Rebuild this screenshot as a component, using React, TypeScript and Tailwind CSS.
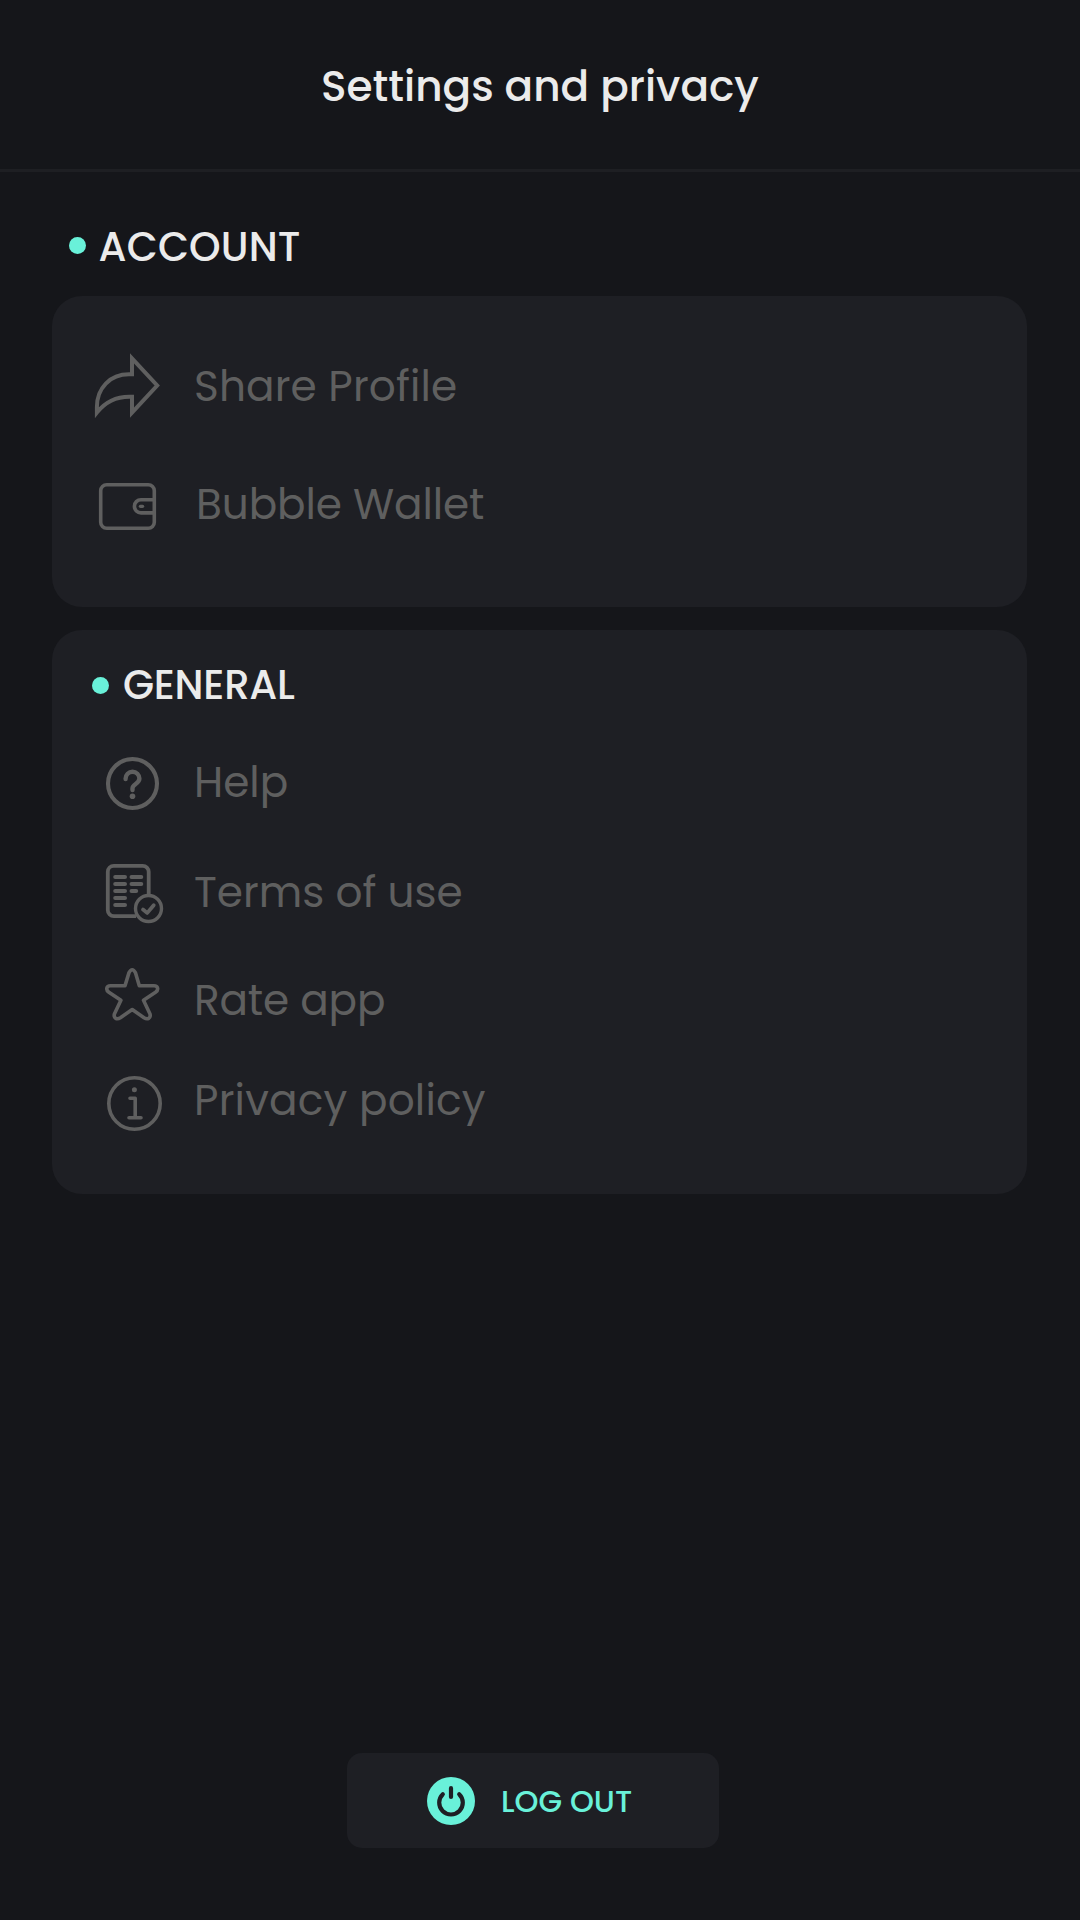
import type { ReactNode } from 'react';

function Icon({ children, width = 3.6 }: { children: ReactNode; width?: number }) {
  return (
    <svg
      viewBox="0 0 72 72"
      className="size-[72px] shrink-0"
      fill="none"
      stroke="currentColor"
      strokeWidth={width}
      aria-hidden="true"
    >
      {children}
    </svg>
  );
}

const ShareIcon = () => (
  <Icon width={4}>
    <path strokeMiterlimit={10} d="M40 8.3 65.2 35.5 40 62.7V46.7C25.5 46 13.5 51.5 4.9 62.5V57C4.9 38 18 24.3 37 24.3H40Z" />
  </Icon>
);

const WalletIcon = () => (
  <Icon>
    <rect x="8.7" y="16.7" width="53.6" height="43.6" rx="6" />
    <path d="M62.3 31.7H49a6.6 6.6 0 0 0 0 13.2h13.3" />
    <path strokeLinecap="round" strokeWidth={3.2} d="M48.4 38.3H50.6" />
  </Icon>
);

const HelpIcon = () => (
  <Icon width={4.1}>
    <circle cx="40.5" cy="37.5" r="24.5" />
    <path
      strokeLinecap="round"
      strokeLinejoin="round"
      strokeWidth={4.4}
      d="M33.6 33v-.4a6.9 6.9 0 0 1 13.8 0c0 5.2-6.9 5.4-6.9 9.6V44"
    />
    <circle cx="40.5" cy="50.3" r="2.8" fill="currentColor" stroke="none" />
  </Icon>
);

const TermsIcon = () => (
  <Icon width={3.8}>
    <path d="M56.7 39V15.8a6 6 0 0 0-6-6H21.8a6 6 0 0 0-6 6v38.4a6 6 0 0 0 6 6H44" />
    <g strokeLinecap="round" strokeWidth={4}>
      <path d="M23.2 21H33M39.5 21H49.3M23.2 28H33M39.5 28H49.3M23.2 35H33M39.5 35H44.2M23.2 42H33M23.2 49H33" />
    </g>
    <circle cx="56.5" cy="52.5" r="13" strokeWidth={3.4} />
    <path strokeLinecap="round" strokeLinejoin="round" d="m51 53.6 4.3 3.3 6.4-7.6" />
  </Icon>
);

const StarIcon = () => (
  <Icon>
    <path
      strokeLinejoin="round"
      d="M33 21.7 37 8.6Q40.2 2.8 43.4 8.6L47.3 21.7H62C66 21.7 67 25.8 63.5 28.3L51.5 36.3 58 50C59 54.3 55.5 56 52 53.7L40.2 45.5 28.4 53.7C24.9 56 21.4 54.3 22.4 50L28.9 36.3 16.9 28.3C13.4 25.8 14.4 21.7 18.4 21.7Z"
    />
  </Icon>
);

const InfoIcon = () => (
  <Icon>
    <circle cx="42.5" cy="39.5" r="25.7" />
    <circle cx="42.4" cy="25.8" r="2.5" fill="currentColor" stroke="none" />
    <path strokeLinecap="round" strokeLinejoin="round" strokeWidth={3.6} d="M38 34.3H43.2V53.7M37 53.7H49" />
  </Icon>
);

function PowerIcon() {
  return (
    <svg viewBox="0 0 48 48" className="size-12 shrink-0" fill="none" aria-hidden="true">
      <circle cx="24" cy="24" r="24" fill="#69f1d9" />
      <path
        stroke="#1e1f24"
        strokeWidth="4.2"
        strokeLinecap="round"
        d="M15.8 17.2a11.8 11.8 0 1 0 16.4 0M24 11.2V20"
      />
    </svg>
  );
}

function Row({ icon, label, className }: { icon: ReactNode; label: string; className: string }) {
  return (
    <li className={`flex items-center text-[42.2px] leading-none ${className}`}>
      {icon}
      <span className="ml-[30px] pt-[2px] whitespace-nowrap">{label}</span>
    </li>
  );
}

function Heading({ label, className }: { label: string; className: string }) {
  return (
    <h2 className={`flex items-center text-[40.2px] leading-none font-medium text-[#ebebeb] ${className}`}>
      <i className="size-[17px] rounded-full bg-[#69f1d9]" />
      <span>{label}</span>
    </h2>
  );
}

export default function App() {
  return (
    <div className="flex h-[1920px] w-[1080px] flex-col bg-[#15161a] font-['Poppins','Inter',sans-serif] text-[#5f5f5f]">
      <header className="flex h-[172px] items-center justify-center border-b-[3px] border-[#1e1f23] pt-[5px]">
        <h1 className="text-[42.2px] leading-none font-medium whitespace-nowrap text-[#ebebeb]">
          Settings and privacy
        </h1>
      </header>

      <main className="flex grow flex-col pr-[53px] pl-[52px]">
        <Heading label="ACCOUNT" className="mt-[50px] h-[47px] gap-[12.5px] pl-[17px] tracking-[0.15px] [&>span]:pt-[3px]" />
        <section className="mt-[27px] h-[311px] rounded-[30px] bg-[#1e1f24] pt-[31px] pl-10">
          <ul>
            <Row icon={<ShareIcon />} label="Share Profile" className="h-[118px] tracking-[0.15px]" />
            <Row icon={<WalletIcon />} label="Bubble Wallet" className="h-[118px] tracking-[-0.1px] [&>span]:pl-[2px]" />
          </ul>
        </section>

        <section className="mt-[23px] h-[564px] rounded-[30px] bg-[#1e1f24] pt-[27px] pl-10">
          <Heading label="GENERAL" className="h-14 gap-[14px] tracking-[-0.25px]" />
          <ul className="mt-[14px]">
            <Row icon={<HelpIcon />} label="Help" className="h-[110px]" />
            <Row icon={<TermsIcon />} label="Terms of use" className="h-[110px]" />
            <Row icon={<StarIcon />} label="Rate app" className="h-[106px] tracking-[-0.15px]" />
            <Row icon={<InfoIcon />} label="Privacy policy" className="h-[94px] tracking-[0.2px]" />
          </ul>
        </section>

        <button
          type="button"
          className="mt-auto mb-[72px] ml-[295px] flex h-[95px] w-[372px] items-center gap-[26px] rounded-[15px] bg-[#1e1f24] pl-20 text-[30.5px] leading-none font-medium whitespace-nowrap text-[#69f1d9]"
        >
          <PowerIcon />
          <span className="pt-[3px]">LOG OUT</span>
        </button>
      </main>
    </div>
  );
}
